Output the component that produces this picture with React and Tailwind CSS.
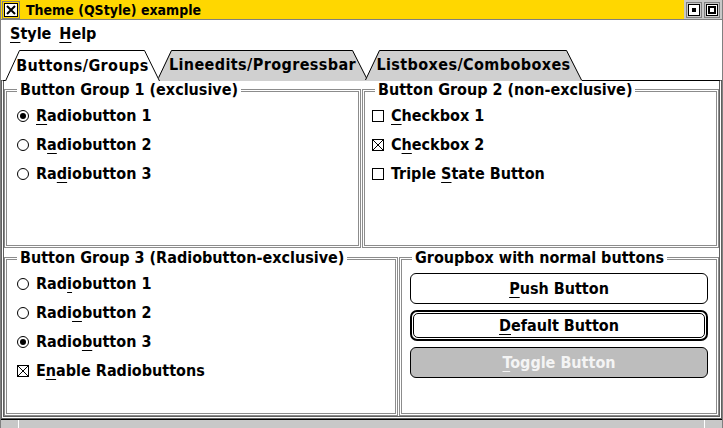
import React from 'react';

const Radio = ({ checked }) => (
  <span className="w-[12px] h-[12px] rounded-full border border-black bg-white flex items-center justify-center shrink-0">
    {checked && <span className="w-[6px] h-[6px] rounded-full bg-black" />}
  </span>
);

const Check = ({ checked }) => (
  <span className="w-[12px] h-[12px] border border-black bg-white shrink-0 flex">
    {checked && (
      <svg width="10" height="10" viewBox="0 0 10 10">
        <path d="M0 0L10 10M10 0L0 10" stroke="black" strokeWidth="1" />
      </svg>
    )}
  </span>
);

const Item = ({ children }) => (
  <div className="h-[29px] flex items-center gap-[7px]">{children}</div>
);

const Group = ({ title, className, children }) => (
  <fieldset className={`border-[3px] border-double border-[#8c8c8c] min-w-0 ${className}`}>
    <legend className="ml-[10px] px-[3px] leading-[16px]">{title}</legend>
    {children}
  </fieldset>
);

const Tab = ({ label, active, className, w }) => (
  <div className={`relative flex items-center justify-center pt-[1px] ${className}`}>
    <svg className="absolute inset-0" width={w} height="32" viewBox={`0 0 ${w} 32`}>
      <polygon
        points={`0,32 14,1 ${w - 15},1 ${w},32`}
        fill={active ? '#ffffff' : '#d0d0d0'}
      />
      <polyline
        points={`0.5,${active ? 32 : 31} 14.5,1.5 ${w - 15.5},1.5 ${w - 0.5},${active ? 32 : 31}`}
        fill="none"
        stroke="black"
        strokeWidth="1"
      />
    </svg>
    <span className="relative tracking-[0.4px]">{label}</span>
  </div>
);

const u = 'underline decoration-1 underline-offset-[3px]';

export default function App() {
  return (
    <div className="w-[723px] h-[428px] bg-white text-black font-bold text-[16px] leading-none font-['DejaVu_Sans_Condensed','DejaVu_Sans',sans-serif] font-stretch-condensed flex flex-col overflow-hidden border-x border-[#808080]">
      {/* title bar */}
      <div className="h-[20px] shrink-0 bg-[#ffd700] border-b border-[#808080] flex items-center">
        <div className="ml-[1px] w-[18px] h-[18px] border border-[#808080] flex items-center justify-center">
          <div className="w-[14px] h-[14px] border border-black bg-white flex items-center justify-center">
            <svg width="10" height="10" viewBox="0 0 10 10">
              <path d="M1 1L9 9M9 1L1 9" stroke="black" strokeWidth="2" />
            </svg>
          </div>
        </div>
        <span className="ml-[6px] text-[14px] font-extrabold">Theme (QStyle) example</span>
        <div className="ml-auto h-full w-[38px] bg-[#c8c8c8] flex items-center gap-[2px] pl-[2px]">
          <div className="w-[16px] h-[16px] border border-[#808080] flex items-center justify-center">
            <div className="w-[12px] h-[12px] border border-black bg-white flex items-center justify-center">
              <div className="w-[4px] h-[4px] bg-black" />
            </div>
          </div>
          <div className="w-[16px] h-[16px] border border-[#808080] flex items-center justify-center">
            <div className="w-[12px] h-[12px] border border-black bg-white flex items-center justify-center">
              <div className="w-[8px] h-[8px] border-2 border-black" />
            </div>
          </div>
        </div>
      </div>

      {/* menu bar */}
      <div className="h-[27px] shrink-0 flex items-center gap-[8px] px-[9px]">
        <span><span className={u}>S</span>tyle</span>
        <span><span className={u}>H</span>elp</span>
      </div>

      {/* tabs */}
      <div className="h-[33px] shrink-0 flex items-end pl-[4px]">
        <Tab label="Buttons/Groups" active w={155} className="w-[155px] h-[32px] -mb-[1px] z-10" />
        <Tab label="Lineedits/Progressbar" w={211} className="w-[211px] h-[31px] -ml-[3px]" />
        <Tab label="Listboxes/Comboboxes" w={217} className="w-[217px] h-[31px] -ml-[3px]" />
      </div>

      {/* panel */}
      <div className="flex-1 border-t border-black border-x-[3px] border-x-[#606060] border-double border-b-[3px] border-b-[#606060] px-0 pt-[1px] flex flex-col gap-[2px]">
        <div className="h-[166px] flex gap-[1px]">
          <Group title="Button Group 1 (exclusive)" className="w-[357px]">
            <div className="pl-[10px] pt-[3px]">
              <Item><Radio checked /><span><span className={u}>R</span>adiobutton 1</span></Item>
              <Item><Radio /><span>R<span className={u}>a</span>diobutton 2</span></Item>
              <Item><Radio /><span>Ra<span className={u}>d</span>iobutton 3</span></Item>
            </div>
          </Group>
          <Group title="Button Group 2 (non-exclusive)" className="flex-1">
            <div className="pl-[7px] pt-[3px]">
              <Item><Check /><span><span className={u}>C</span>heckbox 1</span></Item>
              <Item><Check checked /><span>C<span className={u}>h</span>eckbox 2</span></Item>
              <Item><Check /><span>Triple <span className={u}>S</span>tate Button</span></Item>
            </div>
          </Group>
        </div>
        <div className="h-[166px] flex gap-[1px]">
          <Group title="Button Group 3 (Radiobutton-exclusive)" className="w-[394px]">
            <div className="pl-[10px] pt-[3px]">
              <Item><Radio /><span>Rad<span className={u}>i</span>obutton 1</span></Item>
              <Item><Radio /><span>Radi<span className={u}>o</span>button 2</span></Item>
              <Item><Radio checked /><span>Radio<span className={u}>b</span>utton 3</span></Item>
              <Item><Check checked /><span>E<span className={u}>n</span>able Radiobuttons</span></Item>
            </div>
          </Group>
          <Group title="Groupbox with normal buttons" className="flex-1">
            <div className="px-[8px] pt-[7px] flex flex-col gap-[6px]">
              <button className="h-[31px] rounded-[6px] border border-black bg-white flex items-center justify-center font-bold">
                <span><span className={u}>P</span>ush Button</span>
              </button>
              <button className="h-[31px] rounded-[7px] border-2 border-black bg-white p-[1px] flex font-bold">
                <span className="flex-1 rounded-[5px] border border-black flex items-center justify-center">
                  <span><span className={u}>D</span>efault Button</span>
                </span>
              </button>
              <button className="h-[31px] rounded-[6px] border border-black bg-[#bdbdbd] text-[#f4f4f4] flex items-center justify-center font-bold">
                <span><span className={u}>T</span>oggle Button</span>
              </button>
            </div>
          </Group>
        </div>
      </div>

      {/* bottom frame */}
      <div className="h-[9px] shrink-0 bg-[#c8c8c8] border-t border-black flex">
        <div className="w-[18px] border-r border-white" />
        <div className="flex-1" />
        <div className="w-[18px] border-l border-white" />
      </div>
    </div>
  );
}
